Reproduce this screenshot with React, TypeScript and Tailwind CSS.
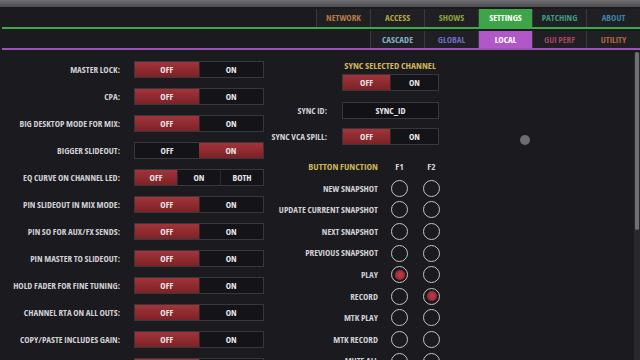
import React from "react";

const font = {
  fontFamily: '"Open Sans", "DejaVu Sans", sans-serif',
  fontStretch: "75%",
};

const mainTabs = [
  { name: "NETWORK", color: "text-[#b27a45]" },
  { name: "ACCESS", color: "text-[#b3a441]" },
  { name: "SHOWS", color: "text-[#8c9f3f]" },
  { name: "SETTINGS", color: "text-white", active: "bg-[#3da547]" },
  { name: "PATCHING", color: "text-[#3f9a7f]" },
  { name: "ABOUT", color: "text-[#3f80aa]" },
];

const subTabs = [
  { name: "CASCADE", color: "text-[#80b0c4]" },
  { name: "GLOBAL", color: "text-[#6b6bc2]" },
  { name: "LOCAL", color: "text-white", active: "bg-[#b058c8]" },
  { name: "GUI PERF", color: "text-[#a3435f]" },
  { name: "UTILITY", color: "text-[#b26442]" },
];

const settings: { label: string; value: string; three?: boolean }[] = [
  { label: "MASTER LOCK:", value: "OFF" },
  { label: "CPA:", value: "OFF" },
  { label: "BIG DESKTOP MODE FOR MIX:", value: "OFF" },
  { label: "BIGGER SLIDEOUT:", value: "ON" },
  { label: "EQ CURVE ON CHANNEL LED:", value: "OFF", three: true },
  { label: "PIN SLIDEOUT IN MIX MODE:", value: "OFF" },
  { label: "PIN SO FOR AUX/FX SENDS:", value: "OFF" },
  { label: "PIN MASTER TO SLIDEOUT:", value: "OFF" },
  { label: "HOLD FADER FOR FINE TUNING:", value: "OFF" },
  { label: "CHANNEL RTA ON ALL OUTS:", value: "OFF" },
  { label: "COPY/PASTE INCLUDES GAIN:", value: "OFF" },
  { label: "", value: "OFF" },
];

const buttonFns: { name: string; f1?: boolean; f2?: boolean }[] = [
  { name: "NEW SNAPSHOT" },
  { name: "UPDATE CURRENT SNAPSHOT" },
  { name: "NEXT SNAPSHOT" },
  { name: "PREVIOUS SNAPSHOT" },
  { name: "PLAY", f1: true },
  { name: "RECORD", f2: true },
  { name: "MTK PLAY" },
  { name: "MTK RECORD" },
  { name: "MUTE ALL" },
];

const Toggle = ({ options, value, width }: { options: string[]; value: string; width: string }) => (
  <div className={`flex h-[17px] ${width} border border-[#38373d] bg-[#141317]`}>
    {options.map((o) => (
      <div
        key={o}
        className={`flex flex-1 items-center justify-center text-[9px] font-bold text-[#e6e6e6] ${
          o === value ? "bg-gradient-to-b from-[#a2343a] to-[#7c2226]" : "border-l border-[#2a292e] first:border-l-0"
        }`}
      >
        {o}
      </div>
    ))}
  </div>
);

const Radio = ({ on }: { on?: boolean }) => (
  <div className="flex h-[17px] w-[17px] items-center justify-center rounded-full border-[1.5px] border-[#c4c4c4]">
    {on && <div className="h-[10px] w-[10px] rounded-full bg-[radial-gradient(circle,#c23a48,#8a2430)]" />}
  </div>
);

export default function App() {
  return (
    <div className="relative h-[360px] w-[640px] overflow-hidden bg-[#1b1a1f]" style={font}>
      {/* window chrome */}
      <div className="h-[7px] bg-gradient-to-b from-[#707074] to-[#4c4b50]" />

      {/* main tabs */}
      <div className="mt-[2px] flex h-[18px] justify-end">
        {mainTabs.map((t) => (
          <div
            key={t.name}
            className={`flex w-[54px] items-center justify-center border-l border-[#3a393f] text-[9px] font-bold ${t.color} ${
              t.active ?? "bg-[#201f24]"
            }`}
          >
            {t.name}
          </div>
        ))}
      </div>
      <div className="ml-[2px] h-[2px] bg-[#3fa94a]" />

      {/* sub tabs */}
      <div className="mt-[2px] flex h-[17px] justify-end">
        {subTabs.map((t) => (
          <div
            key={t.name}
            className={`flex w-[54px] items-center justify-center border-l border-[#3a393f] text-[9px] font-bold ${t.color} ${
              t.active ?? "bg-[#201f24]"
            }`}
          >
            {t.name}
          </div>
        ))}
      </div>
      <div className="ml-[2px] h-[2px] bg-[#9a55b2]" />

      <div className="flex pt-[6px]">
        {/* left column */}
        <div className="flex w-[264px] flex-col">
          {settings.map((s, i) => (
            <div key={i} className="flex h-[27px] items-center gap-[14px]">
              <div className="w-[120px] whitespace-nowrap text-right text-[9px] font-bold text-[#cfcfd3]">{s.label}</div>
              <Toggle
                options={s.three ? ["OFF", "ON", "BOTH"] : ["OFF", "ON"]}
                value={s.value}
                width="w-[130px]"
              />
            </div>
          ))}
        </div>

        {/* right column */}
        <div className="flex w-[180px] flex-col">
          <div className="flex h-[17px] items-end">
            <div className="ml-[78px] w-[96px] whitespace-nowrap text-center text-[9.5px] font-bold text-[#c9b458]">
              SYNC SELECTED CHANNEL
            </div>
          </div>
          <div className="mt-[1px] flex items-center gap-[15px]">
            <div className="w-[63px]" />
            <Toggle options={["OFF", "ON"]} value="OFF" width="w-[97px]" />
          </div>
          <div className="mt-[11px] flex items-center gap-[15px]">
            <div className="w-[63px] whitespace-nowrap text-right text-[9px] font-bold text-[#cfcfd3]">SYNC ID:</div>
            <div className="flex h-[17px] w-[97px] items-center justify-center border border-[#38373d] bg-[#121115] text-[9px] font-bold text-[#e6e6e6]">
              SYNC_ID
            </div>
          </div>
          <div className="mt-[9px] flex items-center gap-[15px]">
            <div className="w-[63px] whitespace-nowrap text-right text-[9px] font-bold text-[#cfcfd3]">SYNC VCA SPILL:</div>
            <Toggle options={["OFF", "ON"]} value="OFF" width="w-[97px]" />
          </div>

          <div className="mt-[11px] flex h-[21.6px] items-center">
            <div className="w-[114px] whitespace-nowrap text-right text-[9.5px] font-bold text-[#c9b458]">BUTTON FUNCTION</div>
            <div className="ml-[13px] w-[17px] text-center text-[9.5px] font-bold text-[#cfcfd3]">F1</div>
            <div className="ml-[15px] w-[17px] text-center text-[9.5px] font-bold text-[#cfcfd3]">F2</div>
          </div>
          {buttonFns.map((b) => (
            <div key={b.name} className="flex h-[21.6px] items-center">
              <div className="w-[114px] whitespace-nowrap text-right text-[9px] font-bold text-[#cfcfd3]">{b.name}</div>
              <div className="ml-[13px]">
                <Radio on={b.f1} />
              </div>
              <div className="ml-[15px]">
                <Radio on={b.f2} />
              </div>
            </div>
          ))}
        </div>
      </div>

      {/* floating touch indicator */}
      <div className="absolute left-[520px] top-[135px] h-[10px] w-[10px] rounded-full bg-[#6d6c71]" />

      {/* scrollbar */}
      <div className="absolute bottom-0 right-0 top-[52px] w-[6px] bg-[#28272c]">
        <div className="mx-auto h-[178px] w-[4px] rounded-sm bg-[#707074]" />
      </div>
    </div>
  );
}
